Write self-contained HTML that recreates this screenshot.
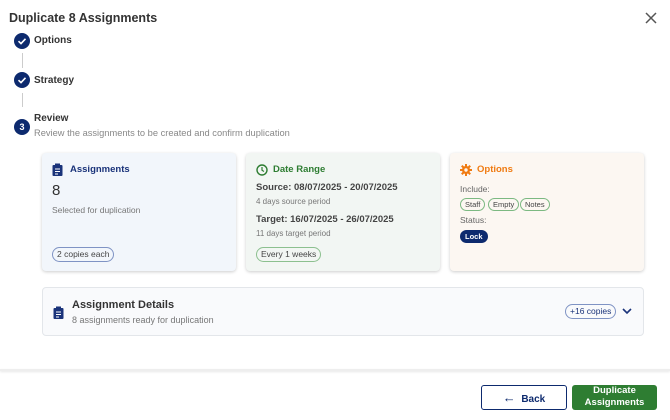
<!DOCTYPE html>
<html><head><style>
*{box-sizing:border-box;margin:0;padding:0}
body{width:670px;height:420px;background:#fff;font-family:"Liberation Sans",sans-serif;color:#333;position:relative;overflow:hidden}
.a{position:absolute}
.circ{position:absolute;width:16px;height:16px;border-radius:50%;background:#0d2a6e;color:#fff;font-size:9px;text-align:center;line-height:16px;font-weight:bold}
.card{position:absolute;top:153px;height:118px;border-radius:4px;box-shadow:0 1px 3px rgba(0,0,0,.2)}
.chip{position:absolute;border:1px solid;border-radius:9px;font-size:8.5px;padding:0 4px;height:15px;line-height:13px}
.sm{font-size:8.5px;color:#777}
</style></head><body>
<div class="a" style="left:9px;top:11px;font-size:12.5px;font-weight:bold;color:#333">Duplicate 8 Assignments</div>
<svg class="a" style="left:645px;top:12px" width="12" height="12"><path d="M1 1L11 11M11 1L1 11" stroke="#555" stroke-width="1.5"/></svg>
<div class="circ" style="left:14px;top:33px"><svg width="16" height="16"><path d="M4.5 8.2L7 10.6L11.5 5.8" stroke="#fff" stroke-width="1.6" fill="none"/></svg></div>
<div class="a" style="left:34px;top:35px;font-size:10px;font-weight:bold">Options</div>
<div class="a" style="left:21.5px;top:53px;width:1px;height:15px;background:#ccc"></div>
<div class="circ" style="left:14px;top:72px"><svg width="16" height="16"><path d="M4.5 8.2L7 10.6L11.5 5.8" stroke="#fff" stroke-width="1.6" fill="none"/></svg></div>
<div class="a" style="left:34px;top:75px;font-size:10px;font-weight:bold">Strategy</div>
<div class="a" style="left:21.5px;top:93px;width:1px;height:14px;background:#ccc"></div>
<div class="circ" style="left:14px;top:119px">3</div>
<div class="a" style="left:34px;top:113px;font-size:10px;font-weight:bold">Review</div>
<div class="a" style="left:34px;top:128px;font-size:9.3px;color:#888">Review the assignments to be created and confirm duplication</div>

<div class="card" style="left:42px;width:194px;background:#f2f6fb">
<svg class="a" style="left:10px;top:10px" width="11" height="13"><rect x="0.5" y="2" width="10" height="11" rx="1" fill="#1a337a"/><rect x="3" y="0.5" width="5" height="3" fill="#1a337a"/><path d="M3 6h5M3 8.5h5M3 11h3" stroke="#fff" stroke-width="1"/></svg>
<div class="a" style="left:28px;top:11px;font-size:9.5px;font-weight:bold;color:#1a337a">Assignments</div>
<div class="a" style="left:10px;top:29px;font-size:15px;color:#333">8</div>
<div class="a sm" style="left:10px;top:52px">Selected for duplication</div>
<div class="chip" style="left:10px;top:94px;border-color:#7f93c4;color:#444">2 copies each</div>
</div>
<div class="card" style="left:246px;width:194px;background:#f2f6f3">
<svg class="a" style="left:10px;top:11px" width="12" height="12"><circle cx="6" cy="6" r="5" stroke="#2e7d32" stroke-width="1.4" fill="none"/><path d="M6 3v3.2l2 1.3" stroke="#2e7d32" stroke-width="1.2" fill="none"/></svg>
<div class="a" style="left:27px;top:11px;font-size:9.5px;font-weight:bold;color:#2e7d32">Date Range</div>
<div class="a" style="left:10px;top:29px;font-size:9.5px;font-weight:bold;color:#444">Source: 08/07/2025 - 20/07/2025</div>
<div class="a sm" style="left:10px;top:44px;font-size:8px">4 days source period</div>
<div class="a" style="left:10px;top:61px;font-size:9.5px;font-weight:bold;color:#444">Target: 16/07/2025 - 26/07/2025</div>
<div class="a sm" style="left:10px;top:76px;font-size:8px">11 days target period</div>
<div class="chip" style="left:10px;top:94px;border-color:#8cc08f;color:#444">Every 1 weeks</div>
</div>
<div class="card" style="left:450px;width:194px;background:#fcf7f2">
<svg class="a" style="left:10px;top:11px" width="12" height="12" viewBox="0 0 12 12"><g fill="#f07b12"><circle cx="6" cy="6" r="4"/><rect x="5" y="0" width="2" height="12"/><rect x="0" y="5" width="12" height="2"/><rect x="5" y="0" width="2" height="12" transform="rotate(45 6 6)"/><rect x="5" y="0" width="2" height="12" transform="rotate(-45 6 6)"/></g><circle cx="6" cy="6" r="1.7" fill="#fcf7f2"/></svg>
<div class="a" style="left:27px;top:11px;font-size:9.5px;font-weight:bold;color:#f07b12">Options</div>
<div class="a" style="left:10px;top:31px;font-size:8.5px;color:#666">Include:</div>
<div class="chip" style="left:10px;top:45px;height:13px;line-height:11px;font-size:7.5px;border-color:#7cb982;color:#444">Staff</div>
<div class="chip" style="left:38px;top:45px;height:13px;line-height:11px;font-size:7.5px;border-color:#7cb982;color:#444">Empty</div>
<div class="chip" style="left:70px;top:45px;height:13px;line-height:11px;font-size:7.5px;border-color:#7cb982;color:#444">Notes</div>
<div class="a" style="left:10px;top:62px;font-size:8.5px;color:#666">Status:</div>
<div class="chip" style="left:10px;top:77px;height:13px;line-height:11px;font-size:7.5px;background:#0d2a6e;border-color:#0d2a6e;color:#fff;font-weight:bold">Lock</div>
</div>

<div class="a" style="left:42px;top:287px;width:602px;height:49px;border:1px solid #e3e6ea;border-radius:4px;background:#f9fafc">
<svg class="a" style="left:10px;top:18px" width="11" height="13"><rect x="0.5" y="2" width="10" height="11" rx="1" fill="#1a337a"/><rect x="3" y="0.5" width="5" height="3" fill="#1a337a"/><path d="M3 6h5M3 8.5h5M3 11h3" stroke="#fff" stroke-width="1"/></svg>
<div class="a" style="left:29px;top:11px;font-size:11px;font-weight:bold;color:#333">Assignment Details</div>
<div class="a" style="left:29px;top:27px;font-size:9px;color:#777">8 assignments ready for duplication</div>
<div class="chip" style="left:522px;top:16px;border-color:#7f93c4;color:#1a337a">+16 copies</div>
<svg class="a" style="left:579px;top:20px" width="10" height="7"><path d="M1 1l4 4 4-4" stroke="#1a337a" stroke-width="1.6" fill="none"/></svg>
</div>

<div class="a" style="left:0;top:369px;width:670px;height:2px;background:#eee;box-shadow:0 1px 2px rgba(0,0,0,.1)"></div>
<div class="a" style="left:481px;top:385px;width:86px;height:25px;border:1px solid #0d2a6e;border-radius:3px;color:#0d2a6e;font-size:10px;font-weight:bold;text-align:center;line-height:23px"><span style="font-size:13px">←</span> &nbsp;Back</div>
<div class="a" style="left:572px;top:385px;width:85px;height:25px;background:#2e7d32;border-radius:3px;color:#fff;font-size:9.5px;font-weight:bold;text-align:center;line-height:12px">Duplicate<br>Assignments</div>
</body></html>
